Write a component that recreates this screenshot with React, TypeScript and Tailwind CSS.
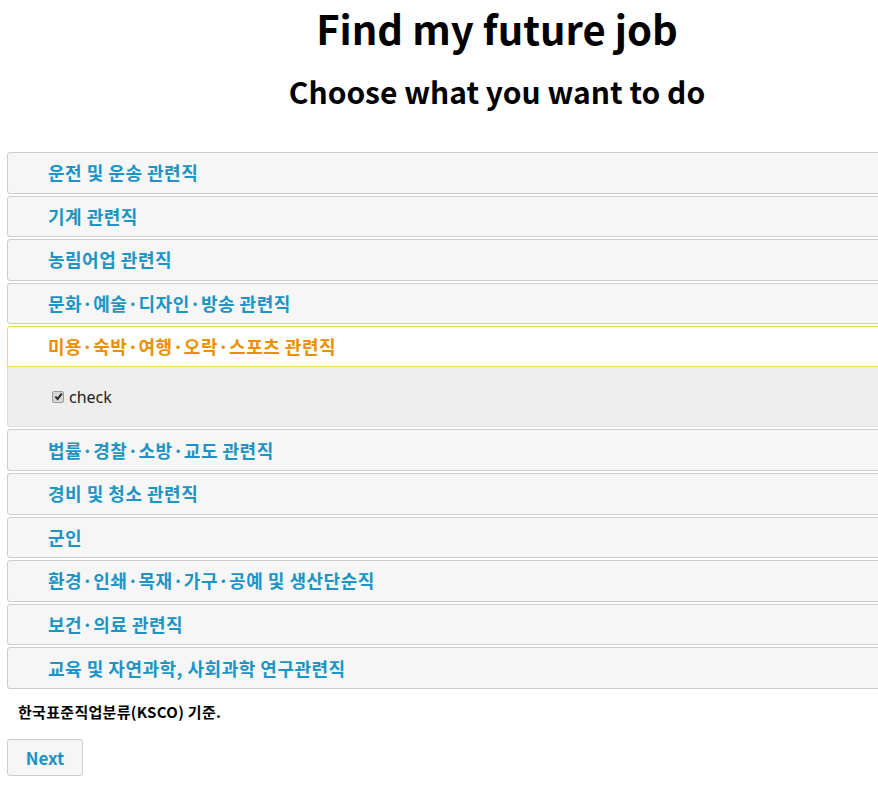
import { useState } from 'react';

const jobs = [
  '운전 및 운송 관련직',
  '기계 관련직',
  '농림어업 관련직',
  '문화·예술·디자인·방송 관련직',
  '미용·숙박·여행·오락·스포츠 관련직',
  '법률·경찰·소방·교도 관련직',
  '경비 및 청소 관련직',
  '군인',
  '환경·인쇄·목재·가구·공예 및 생산단순직',
  '보건·의료 관련직',
  '교육 및 자연과학, 사회과학 연구관련직',
];

const font = { fontFamily: '"Noto Sans CJK KR", "Noto Sans", sans-serif' };

export default function App() {
  const [open, setOpen] = useState(4);
  const [checked, setChecked] = useState(true);

  return (
    <div className="w-[994px] bg-white text-black" style={font}>
      <div className="ml-[7px] w-[980px]">
        <h1 className="mt-[3px] text-center text-[40px] font-bold leading-[50px]">Find my future job</h1>
        <h2 className="mt-[18px] text-center text-[30px] font-bold leading-[40px]">Choose what you want to do</h2>

        <div className="mt-[41px]">
          {jobs.map((job, i) => (
            <div key={job}>
              <button
                onClick={() => setOpen(open === i ? -1 : i)}
                className={
                  i === open
                    ? 'mt-[2px] block h-[41px] w-full rounded-t-[3px] border border-[#fbd850] bg-white pl-[40px] text-left text-[18px] font-bold tracking-[0.5px] text-[#eb8f00]'
                    : 'mt-[2px] block h-[41.6px] w-full rounded-[3px] border border-[#cccccc] bg-[#f6f6f6] pl-[40px] text-left text-[18px] font-bold tracking-[0.5px] text-[#1c94c4]'
                }
              >
                {job}
              </button>
              {i === open && (
                <div className="flex h-[60px] items-center rounded-b-[3px] border border-t-0 border-[#dddddd] bg-[#eeeeee] pl-[44px] text-[16px] text-[#222222]">
                  <label className="flex cursor-pointer items-center gap-[5px]">
                    <input
                      type="checkbox"
                      checked={checked}
                      onChange={() => setChecked(!checked)}
                      className="sr-only"
                    />
                    <span className="flex h-[12px] w-[12px] items-center justify-center rounded-[2px] border border-[#999999] bg-[#d6d6d6]">
                      {checked && (
                        <svg viewBox="0 0 10 10" className="h-[9px] w-[9px]">
                          <path d="M1.5 5.2 L4 7.8 L8.6 1.8" fill="none" stroke="#222" strokeWidth="2.1" />
                        </svg>
                      )}
                    </span>
                    <span style={{ fontFamily: '"Noto Sans", sans-serif' }}>check</span>
                  </label>
                </div>
              )}
            </div>
          ))}
        </div>

        <p className="mt-[13px] pl-[11px] text-[15px] font-bold leading-[20px] tracking-[0.3px]">한국표준직업분류(KSCO) 기준.</p>

        <button className="mt-[17px] h-[37px] w-[76px] rounded-[3px] border border-[#cccccc] bg-[#f6f6f6] text-[17px] font-bold text-[#1c94c4]">
          Next
        </button>
      </div>
    </div>
  );
}
